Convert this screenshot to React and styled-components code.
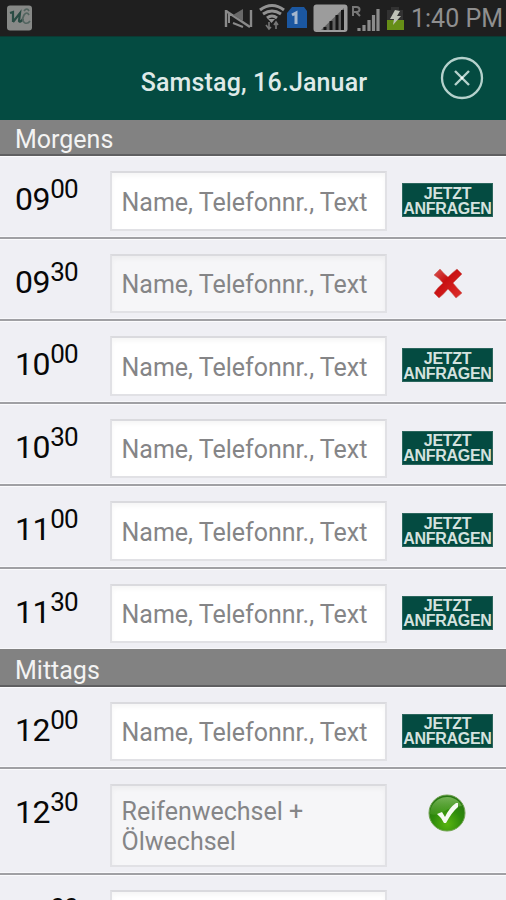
import React from "react";
import styled, { createGlobalStyle } from "styled-components";

const palette = {
    green: "#044b41",
    gray: "#828282",
    page: "#efeff4",
};

const GlobalStyle = createGlobalStyle`
    * {
        box-sizing: border-box;
    }
    body {
        margin: 0;
        overflow: hidden;
        background: ${palette.page};
        font-family: Roboto, "Liberation Sans", sans-serif;
    }
`;

const Screen = styled.div`
    width: 506px;
    height: 900px;
    overflow: hidden;
    background: ${palette.page};
`;

const StatusBar = styled.div`
    display: flex;
    align-items: center;
    justify-content: space-between;
    height: 36px;
    padding: 0 2px 0 6px;
    background: #1f1f1f;
    svg {
        display: block;
    }
`;

const StatusIcons = styled.div`
    display: flex;
    align-items: center;
`;

const Clock = styled.div`
    width: 93px;
    margin-left: 6px;
    padding-top: 1px;
    font-size: 25px;
    line-height: 36px;
    color: #8f8f8f;
    white-space: nowrap;
`;

const Header = styled.header`
    display: grid;
    grid-template-columns: 84px 1fr 84px;
    align-items: center;
    height: 84px;
    padding-left: 2px;
    background: ${palette.green};
    border-top: 1px solid #0b3a33;
    h1 {
        margin: 8px 0 0;
        font-size: 25px;
        font-weight: 500;
        line-height: 30px;
        letter-spacing: 0.15px;
        text-align: center;
        color: #dfeae8;
    }
`;

const CloseButton = styled.button`
    width: 44px;
    height: 44px;
    margin: 0 0 2px 17.5px;
    padding: 0;
    border: 0;
    background: none;
    svg {
        display: block;
    }
`;

const SectionTitle = styled.h2`
    height: ${({ $height }) => $height}px;
    margin: 0;
    padding: ${({ $height }) => $height - 33}px 15px 0;
    border-bottom: 2px solid #5f5f61;
    background: ${palette.gray};
    font-size: 25px;
    font-weight: 400;
    line-height: 33px;
    color: #f3f3f3;
`;

const Row = styled.div`
    display: grid;
    grid-template-columns: 94.5px 277px 91px;
    align-items: start;
    height: ${({ $tall }) => ($tall ? 105.5 : 82.5)}px;
    padding: 15px 0 0 15px;
    border-bottom: 2px solid #a0a0a4;
    box-shadow: inset 0 1px 0 #fbfbfd, inset 0 -1px 0 #f8f8fb;
    &:last-child {
        height: 80.5px;
        border-bottom: 0;
    }
`;

const Time = styled.div`
    display: flex;
    align-items: flex-start;
    color: #080808;
    font-size: 32px;
    line-height: 38px;
    letter-spacing: -0.4px;
    padding-top: 9px;
    sup {
        margin-top: -8px;
        font-size: 26px;
        line-height: 34px;
        letter-spacing: -0.8px;
    }
`;

const Field = styled.div`
    height: ${({ $tall }) => ($tall ? 82.5 : 59.5)}px;
    padding: ${({ $tall }) => ($tall ? 11 : 14.5)}px 0 0 10px;
    border: 2px solid #e1e1e5;
    border-top-color: #dadade;
    background: ${({ $disabled }) => ($disabled ? "#f6f6f8" : "#fff")};
    box-shadow: inset 0 3px 5px rgba(0, 0, 0, 0.04);
    font-size: 25px;
    line-height: 30px;
    color: #858587;
    white-space: pre-line;
`;

const Action = styled.div`
    display: flex;
    justify-content: center;
    width: 91px;
    margin: ${({ $top }) => $top}px 0 0 15.5px;
    svg {
        display: block;
    }
`;

const RequestButton = styled.button`
    width: 91px;
    height: 34px;
    padding: 1px 0 0;
    border: 1px solid #2b665d;
    background: ${palette.green};
    color: #d4e2df;
    font-family: "Liberation Sans", Arial, sans-serif;
    font-size: 16px;
    font-weight: 700;
    line-height: 15px;
    letter-spacing: -0.3px;
    span {
        display: block;
        margin: 0 -4px;
        white-space: nowrap;
    }
`;

const AppIcon = () => (
    <svg width="27" height="26" viewBox="0 0 27 26">
        <rect x="1" y="0.5" width="25" height="25" rx="3" fill="#878987" />
        <path d="M4 8l3-1v10M7 17l7-9-1 8q1 2 4-2" fill="none" stroke="#294b43" strokeWidth="2.2" />
        <path d="M23 10q-2-4-5 0-3 6 1 8 3 1 5-2M18 6q3-4 5 0" fill="none" stroke="#52645f" strokeWidth="1.7" />
    </svg>
);

const SystemIcons = () => (
    <svg width="182" height="36" viewBox="223 0 182 36">
        <g fill="none" stroke="#8a8a8a" strokeWidth="2">
            <path d="M226 10v17M251 10v17" strokeWidth="2.4" />
            <path d="M226 11l24 16" strokeWidth="2.5" />
            <path d="M229 23v-8h4M233 23l10 4" />
        </g>
        <path d="M233 15l10-6v12z" fill="#696969" />
        <g fill="none" stroke="#929292" strokeWidth="3">
            <path d="M260 10q12-9 24 0" />
            <path d="M263 14q9-6 18 0" />
            <path d="M267 18q5-4 10 0" />
        </g>
        <path d="M268 19h7l-3.5 4z" fill="#929292" />
        <path d="M269 22v6M266 25l3 4 2-2M276 29v-6M274 25l2-3 2 3" fill="none" stroke="#777" strokeWidth="1.6" />
        <path d="M287 13l5-6h12l3 4v17h-20z" fill="#1b57a1" />
        <path d="M292 15l4-2v11" fill="none" stroke="#a5b7ce" strokeWidth="3" />
        <rect x="313.5" y="4.5" width="34" height="27.5" rx="3" fill="#9c9c9c" />
        <path d="M321 30L344 8v22z" fill="#626262" />
        <path d="M325 30v-3M331 30v-9M337 30V15M342.5 30V10" stroke="#161616" strokeWidth="3" />
        <path d="M353 16V7h3.5q3 0 3 2.5T356 12h-3M356 12l4 4" fill="none" stroke="#777" strokeWidth="2" />
        <path d="M359 31v-3M364 31v-6M369 31V20M373.5 31V15M378 31V9" stroke="#8b8b8b" strokeWidth="3.2" />
        <path d="M387 10h4V7h8v3h4v20h-16z" fill="#323232" />
        <path d="M387 20h17v10h-17z" fill="#668e16" />
        <path d="M395 10l5 1-3 5h4l-8 9 1-6h-4z" fill="#bfc2b7" />
    </svg>
);

const CloseIcon = () => (
    <svg width="44" height="44" viewBox="0 0 44 44" fill="none" stroke="#b5d1cc">
        <circle cx="22" cy="22" r="20" strokeWidth="2.3" />
        <path d="M15 15l14 14M29 15L15 29" strokeWidth="2.4" />
        <circle cx="22" cy="22" r="1" fill="#fff" stroke="#fff" />
    </svg>
);

const CrossIcon = () => (
    <svg width="30" height="31" viewBox="0 0 30 31">
        <defs>
            <linearGradient id="red" x1="0" y1="0" x2="1" y2="1">
                <stop offset="0" stopColor="#d95753" />
                <stop offset="0.4" stopColor="#c81012" />
                <stop offset="1" stopColor="#df302c" />
            </linearGradient>
        </defs>
        <path
            d="M1 7L7 1Q11 6 15 9Q19 5 24 1L29 6Q24 11 20 15Q24 20 29 25L23 30Q19 25 15 21Q11 26 6 30L1 25Q5 19 10 15Q6 10 1 7Z"
            fill="url(#red)"
            stroke="#c96560"
            strokeWidth="0.6"
        />
    </svg>
);

const CheckIcon = () => (
    <svg width="39" height="38" viewBox="0 0 39 38">
        <defs>
            <radialGradient id="green" cx="0.5" cy="0.8" r="0.75">
                <stop offset="0" stopColor="#59b510" />
                <stop offset="0.55" stopColor="#2e8b0b" />
                <stop offset="1" stopColor="#287513" />
            </radialGradient>
            <linearGradient id="gloss" x1="0" y1="0" x2="0" y2="1">
                <stop offset="0" stopColor="#8fc96d" stopOpacity="0.75" />
                <stop offset="1" stopColor="#6bb23f" stopOpacity="0.25" />
            </linearGradient>
        </defs>
        <circle cx="19" cy="19" r="18" fill="url(#green)" stroke="#72a353" />
        <path d="M2 20A17 17 0 0 1 34 12Q22 13 15 18Q9 22 2 20Z" fill="url(#gloss)" />
        <path d="M9 20L14 18L17 23Q21 14 28 9H30V13Q24 18 18 29H16Q14 24 9 20Z" fill="#f5faf2" />
    </svg>
);

const TimeRow = ({ hour, minute, text = "Name, Telefonnr., Text", status = "free" }) => {
    const tall = text.includes("\n");
    const top = { free: 12, taken: 14, booked: 9.5 }[status];
    return (
        <Row $tall={tall}>
            <Time>
                {hour}
                <sup>{minute}</sup>
            </Time>
            <Field $tall={tall} $disabled={status !== "free"}>{text}</Field>
            <Action $top={top}>
                {status === "free" && (
                    <RequestButton>
                        <span>JETZT</span>
                        <span>ANFRAGEN</span>
                    </RequestButton>
                )}
                {status === "taken" && <CrossIcon />}
                {status === "booked" && <CheckIcon />}
            </Action>
        </Row>
    );
};

const App = () => {
    return (
        <Screen>
            <GlobalStyle />
            <StatusBar>
                <AppIcon />
                <StatusIcons>
                    <SystemIcons />
                    <Clock>1:40 PM</Clock>
                </StatusIcons>
            </StatusBar>
            <Header>
                <span />
                <h1>Samstag, 16.Januar</h1>
                <CloseButton aria-label="Schließen">
                    <CloseIcon />
                </CloseButton>
            </Header>
            <section>
                <SectionTitle $height={36}>Morgens</SectionTitle>
                <TimeRow hour="09" minute="00" />
                <TimeRow hour="09" minute="30" status="taken" />
                <TimeRow hour="10" minute="00" />
                <TimeRow hour="10" minute="30" />
                <TimeRow hour="11" minute="00" />
                <TimeRow hour="11" minute="30" />
            </section>
            <section>
                <SectionTitle $height={37.5}>Mittags</SectionTitle>
                <TimeRow hour="12" minute="00" />
                <TimeRow hour="12" minute="30" text={"Reifenwechsel +\nÖlwechsel"} status="booked" />
                <TimeRow hour="13" minute="00" />
            </section>
        </Screen>
    );
};

export default App;
